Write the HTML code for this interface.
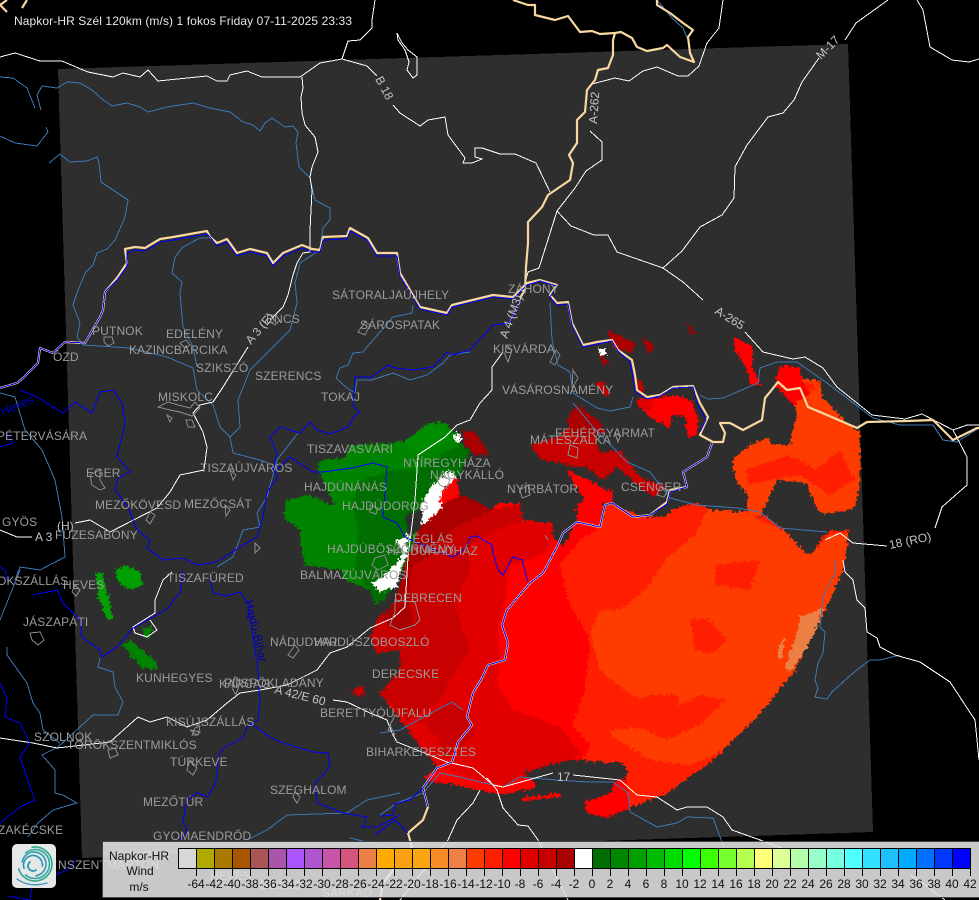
<!DOCTYPE html>
<html><head><meta charset="utf-8"><title>Napkor-HR</title>
<style>html,body{margin:0;padding:0;background:#000;overflow:hidden}svg{display:block}
text{font-family:"Liberation Sans",sans-serif;font-size:12px}
.c text,.c{fill:#9c9c9c;letter-spacing:.15px}
.r{fill:#c4c4c4}
</style></head><body>
<svg width="979" height="900" viewBox="0 0 979 900" xmlns="http://www.w3.org/2000/svg">
<defs><filter id="j" x="0" y="0" width="979" height="900" filterUnits="userSpaceOnUse" color-interpolation-filters="sRGB"><feTurbulence type="fractalNoise" baseFrequency="0.34" numOctaves="2" seed="4"/><feDisplacementMap in="SourceGraphic" scale="8" xChannelSelector="R" yChannelSelector="G"/></filter></defs>
<rect width="979" height="900" fill="#000"/>
<polygon points="58,69 848,44 873,832 82,858" fill="#2e2e2e" shape-rendering="crispEdges"/>

<!-- radar -->
<g filter="url(#j)" shape-rendering="crispEdges">
<!-- main red -->
<polygon fill="#ff0000" points="430,503 457,477 460,500 480,503 493,510 497,503 520,503 522,520 553,523 553,537 563,547 577,520 600,527 607,502 643,517 663,517 677,508 697,503 707,508 710,520 733,520 747,510 757,517 767,517 780,527 787,533 800,550 812,556 822,538 830,530 848,530 848,540 843,570 823,610 793,673 757,717 713,760 667,793 630,808 607,818 587,813 585,802 613,792 613,783 627,777 627,767 620,763 583,760 570,760 523,772 533,787 500,795 480,783 430,783 437,767 410,733 380,693 400,670 400,650 377,653 370,637 380,613 393,612 405,570 405,540"/>
<polygon fill="#ff1e00" points="600,527 607,502 643,517 663,517 677,508 697,503 707,508 710,520 733,520 747,510 757,517 767,517 780,527 787,533 800,550 812,556 822,538 830,530 848,530 848,540 843,570 823,610 793,673 757,717 713,760 667,793 630,808 627,777 627,767 620,763 583,760 590,745 572,725 585,690 590,640 568,600 560,565 580,540"/>
<polygon fill="#ff3c00" points="620,610 645,590 665,560 695,535 707,510 745,512 785,532 808,556 830,535 848,533 843,570 825,610 795,670 757,717 720,752 690,765 650,760 615,738 600,722 632,695 600,670 590,635 600,610"/>
<polygon fill="#ff1e00" points="690,620 707,618 727,640 712,654 695,650"/>
<polygon fill="#ff1e00" points="585,700 610,688 640,698 655,694 680,695 675,715 640,728 610,730 590,725"/>
<polygon fill="#ff1e00" points="635,725 675,708 700,695 725,700 700,725 665,740"/>
<polygon fill="#ff1e00" points="715,565 760,560 750,590 715,585"/>
<polygon fill="#ff1e00" points="610,515 660,525 670,540 640,570 620,545"/>
<polygon fill="#ec8044" points="800,617 823,608 817,627 807,647 790,673 785,667 797,633"/>
<polygon fill="#ec8044" points="777,650 785,637 783,657 778,658"/>
<!-- e0 layer -->
<polygon fill="#e00000" points="410,560 440,530 480,512 520,505 522,521 553,525 553,537 545,552 530,560 510,565 505,600 497,630 500,655 497,685 513,710 560,727 582,755 570,760 523,772 533,787 500,795 480,783 430,783 437,767 410,733 380,693 400,670 400,650 377,653 370,637 380,613 393,612"/>
<!-- c8 layer -->
<polygon fill="#c80000" points="412,560 440,530 480,512 520,505 522,521 495,530 470,545 470,570 455,600 462,630 470,650 450,680 440,700 408,722 380,693 400,670 400,650 377,653 370,637 380,613 393,612"/>
<polygon fill="#c80000" points="420,720 450,702 470,715 475,735 445,760 440,740"/>
<!-- aa layer -->
<polygon fill="#aa0000" points="415,535 440,505 462,495 480,503 493,510 470,520 450,530 430,555 412,565 410,600 414,628 395,628 380,620 395,600 405,570"/>
<!-- low band -->
<polygon fill="#ff0000" points="423,778 443,767 480,782 505,786 520,778 532,778 537,787 500,795 480,790"/>
<polygon fill="#ff0000" points="522,798 560,793 560,797 523,801"/>
<!-- separate bits -->
<polygon fill="#c80000" points="352,690 360,685 367,692 358,698"/>
<polygon fill="#c80000" points="530,445 560,437 567,427 593,430 600,453 620,450 640,477 667,487 653,497 640,487 617,467 603,480 587,467 577,467 560,463 542,460"/>
<polygon fill="#aa0000" points="567,420 577,405 598,420 605,432 585,438 570,435"/>
<polygon fill="#ff0000" points="567,470 585,478 613,493 612,502 603,503 600,527 577,520 577,505 585,500 575,485"/>
<polygon fill="#ff0000" points="635,400 677,395 693,402 698,420 697,437 688,437 685,417 673,415 670,428 650,417 640,407"/>
<polygon fill="#e00000" points="635,400 655,397 650,412 640,407"/>
<polygon fill="#aa0000" points="607,330 635,343 632,353 613,348"/>
<polygon fill="#aa0000" points="643,337 655,347 650,353 645,347"/>
<polygon fill="#aa0000" points="687,322 695,333 690,335"/>
<polygon fill="#aa0000" points="598,347 610,367 602,363"/>
<polygon fill="#c80000" points="637,378 642,380 645,393 638,392"/>
<polygon fill="#c80000" points="595,382 603,382 611,395 604,396"/>
<polygon fill="#ff0000" points="733,337 753,347 752,367 762,385 750,385 747,370 735,350"/>
<polygon fill="#aa0000" points="462,430 475,432 490,455 475,455 465,445"/>
<!-- NE orange -->
<polygon fill="#ff3c00" points="732,460 747,447 767,438 773,445 790,445 797,413 782,378 820,380 822,397 847,423 860,433 860,487 855,507 843,512 820,513 813,500 807,483 777,480 760,517 747,515 747,493 737,483"/>
<polygon fill="#ff1e00" points="745,470 790,455 815,470 840,450 855,480 830,495 800,475 770,480 750,485"/>
<polygon fill="#ff1e00" points="787,370 800,368 803,382 818,385 800,400 790,395"/>
<polygon fill="#ff0000" points="780,365 800,368 803,382 810,395 793,405 775,385"/>
<!-- green -->
<polygon fill="#008400" points="284,517 287,500 310,495 330,505 335,505 318,470 320,460 345,458 350,445 395,443 420,435 428,423 445,423 455,432 462,445 470,450 460,475 432,485 420,520 412,550 400,575 385,600 375,605 370,590 345,580 340,570 305,565 302,552 300,530 286,520"/>
<polygon fill="#006e00" points="360,480 395,470 415,470 450,450 462,445 470,450 460,475 432,485 420,520 412,550 400,575 385,600 375,605 370,590 355,575 358,530 352,505"/>
<polygon fill="#008e00" points="405,442 428,423 445,423 450,440 430,450 410,452"/>
<polygon fill="#00a000" points="115,570 125,565 140,572 143,585 130,590 118,582"/>
<polygon fill="#00a000" points="95,574 102,572 108,595 113,620 107,618 99,600"/>
<polygon fill="#008400" points="122,645 130,640 145,652 157,662 156,670 142,668"/>
<polygon fill="#008400" points="143,628 152,627 151,637 145,638"/>
<!-- white -->
<polygon fill="#fff" points="430,487 450,470 457,477 443,490 440,500 442,508 423,525 413,530 405,545 395,540 405,537 412,525 420,508"/>
<polygon fill="#fff" points="395,540 405,537 408,553 400,570 397,587 380,592 372,583 380,578 397,563 403,553"/>
<polygon fill="#fff" points="455,432 460,434 461,442 455,441"/>
<polygon fill="#fff" points="597,347 607,350 607,355 600,355"/>
<polygon fill="#2e2e2e" points="405,515 423,510 420,530 408,535"/>
</g>

<!-- steel rivers -->
<g fill="none" stroke="#3c78b4" stroke-width="1" shape-rendering="crispEdges">
<path d="M0,77L13,78L27,88L35,108M41,110L37,95L42,86L57,88L67,82L80,83L92,90L102,99L112,106L127,103L140,107L148,112L167,107L193,103L210,108L230,112L243,122L253,125L260,131L265,123L272,118L285,127L293,126L298,132L296,143L299,167L310,178L315,200L330,208L330,220L323,228L320,250L300,263L295,283L297,303L290,330L280,340L250,370L238,400L240,427L230,437L233,453L260,460L268,463"/>
<path d="M0,136L15,143L37,146L48,132L46,127"/>
<path d="M49,163L60,154L70,162L87,161L97,157L99,163L101,182L128,200L125,217L115,240L107,249L97,253L93,265L85,273L77,293L73,305L80,323L77,337L83,345L130,348L167,357L193,368L197,390L213,405L220,427L230,437"/>
<path d="M208,238L200,238L183,247L175,257L172,273L182,282L180,293L183,327L193,347L197,367"/>
<path d="M298,433L277,460L267,497L257,513L260,527L243,530L233,557L217,567"/>
<path d="M0,393L15,397L25,430L42,450L55,480L62,517L65,557L40,570L20,567L15,580"/>
<path d="M20,570L0,620"/>
<path d="M7,647L7,655L27,683L33,703L40,713L43,730L60,743"/>
<path d="M100,658L98,667L113,672L115,687L123,702L118,715L93,715L80,727L58,747L42,755L55,770L55,793L63,795L77,803L53,810L38,823L28,837"/>
<path d="M247,840L267,830L287,815L347,813L367,800L400,793"/>
<path d="M380,733L400,730L418,720L452,702L463,710"/>
<path d="M380,815L397,803L423,793L440,773L460,777L480,782L503,787L520,777L557,780L587,782L613,782L628,793L630,812L657,827L677,823L687,817L713,818L720,837L730,860"/>
<path d="M413,305L412,313L393,317L367,347L363,352L353,353L348,365L340,368L336,378L347,388L355,393L357,380L372,380L393,373L410,380L427,375L443,363L450,355L470,352"/>
<path d="M550,303L552,340L558,365L570,372L573,393L597,408L610,411L630,407L633,397"/>
<path d="M573,403L593,427L627,462L650,472L670,498L697,505L737,508L760,512L780,528L827,532"/>
<path d="M700,395L708,399L723,398L758,383L760,368L777,362L797,362L827,383L873,418L900,425L933,425L943,440L957,442L979,428"/>
<path d="M835,560L835,573L823,597L820,627L825,632L823,653L818,663L815,680L818,688L815,697L827,699L832,692L853,673L870,660L880,660L900,655"/>
<path d="M657,0L672,18L683,28L688,40L690,54L694,60"/>
<path d="M350,838L400,850L450,890"/>
</g>

<!-- white roads -->
<g fill="none" stroke="#fff" stroke-width="1" shape-rendering="crispEdges">
<path d="M0,57L15,53L40,61L62,61L83,70L88,72L113,77L123,73L140,77L148,70L158,81L207,76L217,81L227,81L230,75L247,71L262,77L300,77L320,63L342,59L367,66L377,76"/>
<path d="M393,105L400,113L420,126L428,120L445,117L448,135L465,158L463,163L472,163L482,159L475,157L475,148L482,148L500,154L515,154L536,163L550,192"/>
<path d="M342,59L348,41L360,40L372,28L372,20L375,0"/>
<path d="M397,33L402,43L408,50L417,57L417,75L413,78L407,70L409,62L405,50L398,40Z"/>
<path d="M592,84L615,78L629,81L643,71L657,67L678,76L688,76L699,66L707,43L719,28L723,0"/>
<path d="M590,131L602,142L602,160L586,171L575,188L557,211L539,268L528,272L521,298L510,322"/>
<path d="M557,211L571,226L594,235L608,235L617,252L663,268L683,282L703,300"/>
<path d="M745,332L763,352L793,359L805,357L823,368L837,387L872,415L905,419L922,414L953,430L967,425L979,425"/>
<path d="M953,430L967,457L967,485L942,507L935,528"/>
<path d="M887,546L853,543L840,533L825,540"/>
<path d="M663,268L682,251L700,227L722,215L734,198L735,167L747,145L768,117L783,113L794,100L802,82L819,58"/>
<path d="M845,40L856,23L888,0"/>
<path d="M917,0L923,10L930,47L952,60L969,62L979,59"/>
<path d="M302,77L303,88L301,97L302,113L305,125L315,137L318,152L312,167L310,177L312,190L310,230L310,252L303,253L297,263L293,275L288,295L283,307L270,320"/>
<path d="M248,347L223,387L213,402L200,405L193,413L203,432L207,447L204,470L180,475L170,492L157,508L110,532L90,520L75,523"/>
<path d="M32,537L17,537L0,530"/>
<path d="M0,738L33,743L57,748L110,742L138,717L150,722L167,717L187,727L207,720L227,703L240,693L260,690L287,685L317,670L330,653L347,647L370,628L393,618L405,607L408,557L415,500L418,455L445,437L457,425L470,420L480,403L492,390L492,367L503,352"/>
<path d="M333,700L347,702L370,713L387,720L392,733L397,742L447,762L473,768L493,785L503,787L553,773"/>
<path d="M573,775L620,780L637,795L657,797L677,810L687,807L707,807L723,817L732,830L760,840L800,855L830,862"/>
<path d="M487,778L497,790L503,808L518,825L528,826L538,840L548,860L568,900"/>
<path d="M480,790L473,803L457,820L448,840L440,850L400,900"/>
<path d="M172,572L163,580L155,600L155,613L133,627L135,633L147,637L157,630L150,620"/>
<path d="M843,560L845,572L853,580L857,600L865,608L867,632L877,638L880,647L895,655L920,662L950,682L975,720L979,760"/>
<path d="M910,875L925,885L945,900"/>
</g>

<!-- cream border -->
<g fill="none" stroke="#f8d8a0" stroke-width="2.2" stroke-linejoin="round">
<path d="M513,0L528,5L535,5L535,15L555,20L568,16L580,32L592,31L600,34L615,33L621,32L632,38L637,47L647,51L663,48L667,45L680,57L694,62L690,53L688,37L693,30L683,23L670,13L657,5L657,0"/>
<path d="M615,33L613,40L613,55L608,68L598,70L595,80L587,90L585,112L577,120L577,143L569,155L573,163L570,180L548,195L542,207L528,222L528,243L526,267L525,290L520,298"/>
<path d="M7,0L0,5M7,12L0,5M22,8L27,0"/>
<path d="M0,388L17,383L23,378L38,363L40,348L53,353L65,342L85,343L100,317L103,310L105,292L117,278L127,263L125,249L135,247L145,248L160,239L173,237L207,231L210,237L217,243L227,239L237,253L250,249L267,253L273,263L283,253L302,245L312,249L320,250L323,237L347,236L350,228L368,238L377,253L397,253L400,273L410,290L420,307L447,313L452,305L493,295L513,297L527,283L540,280L557,285L550,295L557,303L568,302L572,323L583,345L597,342L612,340L618,350L632,360L635,375L637,390L647,397L660,395L673,387L693,386L700,403L708,417L702,430L700,435L713,442L723,442L725,433L720,423L730,423L743,430L762,420L765,398L770,392L778,382L787,390L800,388L808,407L827,415L857,428L867,422L907,421L933,420L943,430L953,440L977,428L979,428"/>
<path d="M712,443L707,457L683,472L687,487L670,490L667,502L650,515L633,517L612,503L605,505L600,527L577,522L563,533L557,547L543,573L530,583L507,610L502,625L508,643L505,660L488,665L482,678L473,693L467,717L472,725L458,742L452,762L437,768L423,788L428,807L423,820L408,833L412,847L383,883L380,900"/>
</g>

<!-- county blue -->
<g fill="none" stroke="#0000ff" stroke-width="1" shape-rendering="crispEdges">
<path d="M0,388L17,383L23,378L38,363L40,348L53,353L65,342L85,343L100,317L103,310L105,292L117,280L127,266L127,253L135,250L145,251L160,242L173,240L207,234L210,237L217,246L227,242L237,256L250,252L267,256L273,266L283,256L302,248L312,252L320,252L323,240L347,239L350,231L368,241L377,256L397,256L400,276L410,292L420,309L447,315L452,307L493,297L513,299L527,285L540,281L557,286L550,297L557,305L568,304L572,325L583,347L597,344L612,341L618,351L630,362L633,377L635,392L647,399L660,396L673,388L693,387L698,405L706,420L700,432"/>
<path d="M712,443L707,457L683,472L687,487L670,492L667,504L650,515L633,517L612,503L605,505L600,527L577,522L563,533L557,547L543,573L530,583L507,610L502,625L508,643L505,660L488,665L482,678L473,693L467,717L472,725L458,742L452,762L437,768L423,788L428,807"/>
<path d="M423,788L410,800L395,804L393,815L380,816"/>
<path d="M20,390L37,397L63,413L75,402L92,413L100,392L113,390L122,403L125,423L117,457L130,472L118,478L115,490L128,507L137,530L150,540L147,548L163,560L182,558L197,565L213,563L223,558L240,547L257,537L263,517L267,492L278,477L273,470L277,453L270,437L280,427L300,433L310,422L317,430L330,434L348,427L355,415L360,413L353,405L355,377L372,377L388,365L395,368L413,370L433,367L447,352L452,355L470,350L493,325L510,323L517,307L520,300"/>
<path d="M277,470L290,457L313,472L323,472L352,468L373,463L387,467L383,517L397,523L405,537L427,547L453,557L467,547L470,537L477,536L492,545L493,553L498,570L503,575L513,557L522,560L528,582"/>
<path d="M210,577L213,593L227,596L240,592L248,603L258,670L260,703L258,720L247,727L243,738L223,748L218,757L217,780L208,797L197,793L187,800L183,820L187,830L180,840"/>
<path d="M253,725L270,737L283,743L313,752L328,753L330,767L315,783L317,803L343,813L367,817L362,827L377,827L400,815"/>
<path d="M33,595L57,590L63,603L80,620L82,637L100,650L102,657L117,647L123,640L133,628L153,617L168,608L180,592L183,577L182,570"/>
<path d="M0,683L7,698L5,717L20,723L30,743L20,757L30,787L35,800L20,807L0,823"/>
<path d="M0,447L13,443L7,433"/>
<path d="M0,567L5,570L7,580M8,896L30,900L32,885L50,878L70,868L75,860"/>
<path d="M408,833L395,820L375,835"/>
</g>

<!-- city outlines -->
<g fill="none" stroke="#8c8c8c" stroke-width="1" shape-rendering="crispEdges">
<path d="M104,337L112,337L114,343L108,346L104,342Z M180,343L186,340L190,345L185,348Z M158,407L168,402L178,405L190,408L195,402L200,408L192,416L180,412L170,410ZM167,415L172,418L170,422ZM186,420L192,420L195,427L188,427Z M230,470L236,475L233,480ZM90,475L100,470L100,480L105,488L100,490L92,485Z M150,512L146,520L150,524L155,515Z M225,505L230,510L226,516ZM75,585L80,590L76,596L72,592Z M30,633L40,632L44,640L38,645L32,640Z"/>
<path d="M295,645L299,650L293,658L288,655ZM235,677L240,682L236,695L232,688ZM195,728L200,726L198,735L192,735ZM190,760L197,768L193,775L187,770ZM295,792L300,797L297,803L293,797ZM108,750L115,748L118,755L110,758ZM190,730L200,732L197,735ZM255,543L260,548L255,553ZM370,505L378,508L376,514L370,512ZM375,558L385,555L388,565L378,570L372,565ZM395,600L415,602L420,620L415,625L400,630L390,625L395,612ZM545,535L548,540ZM570,445L578,448L577,458L568,455ZM437,480L442,475L450,480L446,488L440,485ZM520,490L528,485L530,495L522,498ZM660,487L668,490L664,497L657,495Z"/>
<path d="M556,350L560,355L555,365L550,362ZM506,345L512,350L508,362L505,355ZM573,370L578,378L572,388ZM615,433L620,436L618,442ZM358,332L365,322L370,325L365,335ZM395,715L390,725L395,735L388,730ZM280,320L275,325L270,322"/>
</g>

<!-- labels -->
<g class="c">
<text x="332" y="299">SÁTORALJAÚJHELY</text>
<text x="360" y="329">SÁROSPATAK</text>
<text x="508" y="293">ZÁHONY</text>
<text x="493" y="353">KISVÁRDA</text>
<text x="502" y="394">VÁSÁROSNAMÉNY</text>
<text x="321" y="401">TOKAJ</text>
<text x="266" y="323">ENCS</text>
<text x="92" y="335">PUTNOK</text>
<text x="166" y="338">EDELÉNY</text>
<text x="129" y="354">KAZINCBARCIKA</text>
<text x="53" y="361">ÓZD</text>
<text x="196" y="372">SZIKSZÓ</text>
<text x="255" y="380">SZERENCS</text>
<text x="158" y="401">MISKOLC</text>
<text x="-3" y="440">PÉTERVÁSÁRA</text>
<text x="86" y="477">EGER</text>
<text x="200" y="472">TISZAÚJVÁROS</text>
<text x="95" y="509">MEZŐKÖVESD</text>
<text x="184" y="508">MEZŐCSÁT</text>
<text x="2" y="526">GYÖS</text>
<text x="55" y="539">FÜZESABONY</text>
<text x="63" y="589">HEVES</text>
<text x="-3" y="585">OKSZÁLLÁS</text>
<text x="23" y="626">JÁSZAPÁTI</text>
<text x="167" y="582">TISZAFÜRED</text>
<text x="136" y="682">KUNHEGYES</text>
<text x="270" y="646">NÁDUDVAR</text>
<text x="314" y="646">HAJDÚSZOBOSZLÓ</text>
<text x="219" y="688">KARCAG</text>
<text x="224" y="687">PÜSPÖKLADÁNY</text>
<text x="372" y="678">DERECSKE</text>
<text x="320" y="717">BERETTYÓÚJFALU</text>
<text x="166" y="726">KISÚJSZÁLLÁS</text>
<text x="366" y="756">BIHARKERESZTES</text>
<text x="34" y="741">SZOLNOK</text>
<text x="67" y="749">TÖRÖKSZENTMIKLÓS</text>
<text x="170" y="766">TÚRKEVE</text>
<text x="143" y="806">MEZŐTÚR</text>
<text x="270" y="794">SZEGHALOM</text>
<text x="-2" y="834">ZAKÉCSKE</text>
<text x="153" y="840">GYOMAENDRŐD</text>
<text x="58" y="869">NSZENTMÁRTON</text>
<text x="394" y="602">DEBRECEN</text>
<text x="300" y="579">BALMAZÚJVÁROS</text>
<text x="327" y="553">HAJDÚBÖSZÖRMÉNY</text>
<text x="387" y="555">HAJDÚHADHÁZ</text>
<text x="405" y="543">TÉGLÁS</text>
<text x="342" y="510">HAJDÚDOROG</text>
<text x="304" y="491">HAJDÚNÁNÁS</text>
<text x="307" y="453">TISZAVASVÁRI</text>
<text x="403" y="467">NYÍREGYHÁZA</text>
<text x="430" y="479">NAGYKÁLLÓ</text>
<text x="507" y="493">NYÍRBÁTOR</text>
<text x="530" y="444">MÁTÉSZALKA</text>
<text x="555" y="437">FEHÉRGYARMAT</text>
<text x="621" y="491">CSENGER</text>
</g>
<g class="r">
<text transform="translate(375,79) rotate(62)">B 18</text>
<text transform="translate(597,124) rotate(-86)">A-262</text>
<text transform="translate(821,60) rotate(-45)">M-17</text>
<text transform="translate(714,313) rotate(32)">A-265</text>
<text transform="translate(251,345) rotate(-50)">A 3 (E)</text>
<text transform="translate(507,339) rotate(-70)">A 4 (M3)</text>
<text x="35" y="541">A 3</text>
<text x="57" y="530">(H)</text>
<text x="557" y="781">17</text>
<text transform="translate(274,693) rotate(14)">A 42/E 60</text>
<text transform="translate(890,549) rotate(-12)">18 (RO)</text>
</g>
<text transform="translate(245,601) rotate(77)" fill="#0000aa">Hajdú-Bihar</text>
<text transform="translate(3,416) rotate(-24)" fill="#0000cc">Heves</text>

<text x="14" y="25" fill="#e8e8e8" textLength="338" lengthAdjust="spacing">Napkor-HR Szél 120km (m/s) 1 fokos Friday 07-11-2025 23:33</text>

<!-- legend -->
<g class="c"><text x="210" y="880">HEVES</text><text x="260" y="889">BÉKÉS</text><text x="322" y="897">SARKAD</text><text x="128" y="860">ZAROS</text></g>
<rect x="102.5" y="841.5" width="880" height="56" fill="#e4e4e4" fill-opacity=".88" stroke="#444" stroke-width="1" shape-rendering="crispEdges"/>
<g shape-rendering="crispEdges" stroke="#000" stroke-width="1">
<rect x="178.5" y="848.5" width="18" height="20" fill="#d8d8d8"/><rect x="196.5" y="848.5" width="18" height="20" fill="#b0aa00"/><rect x="214.5" y="848.5" width="18" height="20" fill="#aa7a00"/><rect x="232.5" y="848.5" width="18" height="20" fill="#aa5500"/><rect x="250.5" y="848.5" width="18" height="20" fill="#aa5555"/><rect x="268.5" y="848.5" width="18" height="20" fill="#aa55aa"/><rect x="286.5" y="848.5" width="18" height="20" fill="#aa55ff"/><rect x="304.5" y="848.5" width="18" height="20" fill="#b055d0"/><rect x="322.5" y="848.5" width="18" height="20" fill="#c855aa"/><rect x="340.5" y="848.5" width="18" height="20" fill="#d45580"/><rect x="358.5" y="848.5" width="18" height="20" fill="#ec8044"/><rect x="376.5" y="848.5" width="18" height="20" fill="#ffaa00"/><rect x="394.5" y="848.5" width="18" height="20" fill="#faa014"/><rect x="412.5" y="848.5" width="18" height="20" fill="#fba414"/><rect x="430.5" y="848.5" width="18" height="20" fill="#f58c28"/><rect x="448.5" y="848.5" width="18" height="20" fill="#ee8046"/><rect x="466.5" y="848.5" width="18" height="20" fill="#ff3c00"/><rect x="484.5" y="848.5" width="18" height="20" fill="#ff1e00"/><rect x="502.5" y="848.5" width="18" height="20" fill="#ff0000"/><rect x="520.5" y="848.5" width="18" height="20" fill="#e00000"/><rect x="538.5" y="848.5" width="18" height="20" fill="#c80000"/><rect x="556.5" y="848.5" width="18" height="20" fill="#aa0000"/><rect x="574.5" y="848.5" width="18" height="20" fill="#ffffff"/><rect x="592.5" y="848.5" width="18" height="20" fill="#006e00"/><rect x="610.5" y="848.5" width="18" height="20" fill="#008600"/><rect x="628.5" y="848.5" width="18" height="20" fill="#00a000"/><rect x="646.5" y="848.5" width="18" height="20" fill="#00bc00"/><rect x="664.5" y="848.5" width="18" height="20" fill="#00dc00"/><rect x="682.5" y="848.5" width="18" height="20" fill="#00ff00"/><rect x="700.5" y="848.5" width="18" height="20" fill="#3cff00"/><rect x="718.5" y="848.5" width="18" height="20" fill="#78ff32"/><rect x="736.5" y="848.5" width="18" height="20" fill="#b4ff50"/><rect x="754.5" y="848.5" width="18" height="20" fill="#ffff78"/><rect x="772.5" y="848.5" width="18" height="20" fill="#dcff96"/><rect x="790.5" y="848.5" width="18" height="20" fill="#b4ffaa"/><rect x="808.5" y="848.5" width="18" height="20" fill="#96ffc8"/><rect x="826.5" y="848.5" width="18" height="20" fill="#78ffe0"/><rect x="844.5" y="848.5" width="18" height="20" fill="#50ffff"/><rect x="862.5" y="848.5" width="18" height="20" fill="#32e0ff"/><rect x="880.5" y="848.5" width="18" height="20" fill="#1ec0ff"/><rect x="898.5" y="848.5" width="18" height="20" fill="#00aaff"/><rect x="916.5" y="848.5" width="18" height="20" fill="#0070ff"/><rect x="934.5" y="848.5" width="18" height="20" fill="#0038ff"/><rect x="952.5" y="848.5" width="18" height="20" fill="#0000ff"/>
</g>
<path d="M196.5,868V876M214.5,868V876M232.5,868V876M250.5,868V876M268.5,868V876M286.5,868V876M304.5,868V876M322.5,868V876M340.5,868V876M358.5,868V876M376.5,868V876M394.5,868V876M412.5,868V876M430.5,868V876M448.5,868V876M466.5,868V876M484.5,868V876M502.5,868V876M520.5,868V876M538.5,868V876M556.5,868V876M574.5,868V876M592.5,868V876M610.5,868V876M628.5,868V876M646.5,868V876M664.5,868V876M682.5,868V876M700.5,868V876M718.5,868V876M736.5,868V876M754.5,868V876M772.5,868V876M790.5,868V876M808.5,868V876M826.5,868V876M844.5,868V876M862.5,868V876M880.5,868V876M898.5,868V876M916.5,868V876M934.5,868V876M952.5,868V876M970.5,868V876" stroke="#000" stroke-width="1" shape-rendering="crispEdges"/>
<g fill="#111" text-anchor="middle">
<text x="139" y="860">Napkor-HR</text><text x="140" y="875">Wind</text><text x="139" y="891" font-size="11">m/s</text>
<text x="196" y="888">-64</text><text x="214" y="888">-42</text><text x="232" y="888">-40</text><text x="250" y="888">-38</text><text x="268" y="888">-36</text><text x="286" y="888">-34</text><text x="304" y="888">-32</text><text x="322" y="888">-30</text><text x="340" y="888">-28</text><text x="358" y="888">-26</text><text x="376" y="888">-24</text><text x="394" y="888">-22</text><text x="412" y="888">-20</text><text x="430" y="888">-18</text><text x="448" y="888">-16</text><text x="466" y="888">-14</text><text x="484" y="888">-12</text><text x="502" y="888">-10</text><text x="520" y="888">-8</text><text x="538" y="888">-6</text><text x="556" y="888">-4</text><text x="574" y="888">-2</text>
<text x="592" y="888">0</text><text x="610" y="888">2</text><text x="628" y="888">4</text><text x="646" y="888">6</text><text x="664" y="888">8</text><text x="682" y="888">10</text><text x="700" y="888">12</text><text x="718" y="888">14</text><text x="736" y="888">16</text><text x="754" y="888">18</text><text x="772" y="888">20</text><text x="790" y="888">22</text><text x="808" y="888">24</text><text x="826" y="888">26</text><text x="844" y="888">28</text><text x="862" y="888">30</text><text x="880" y="888">32</text><text x="898" y="888">34</text><text x="916" y="888">36</text><text x="934" y="888">38</text><text x="952" y="888">40</text><text x="970" y="888">42</text>
</g>

<!-- logo -->
<rect x="12" y="844" width="44" height="44" rx="5" fill="#e6e8e8"/>
<g fill="none" stroke-linecap="round">
<circle cx="35" cy="864" r="17" stroke="#2fa88e" stroke-width="1.6" stroke-dasharray="78 30" transform="rotate(-100 35 864)"/>
<circle cx="35" cy="864" r="14.5" stroke="#2fa8a0" stroke-width="1.6" stroke-dasharray="66 26" transform="rotate(-130 35 864)"/>
<circle cx="34" cy="864" r="12" stroke="#2b9eb0" stroke-width="1.6" stroke-dasharray="52 24" transform="rotate(-170 34 864)"/>
<circle cx="33" cy="865" r="9.5" stroke="#2a93b4" stroke-width="1.6" stroke-dasharray="34 26" transform="rotate(-200 33 865)"/>
<path d="M30,862a5,5 0 0 0 6,8" stroke="#2a9ab0" stroke-width="1.8"/>
<path d="M17,879q12,9 30,4" stroke="#3d93bd" stroke-width="1.4"/>
</g>
</svg>
</body></html>
